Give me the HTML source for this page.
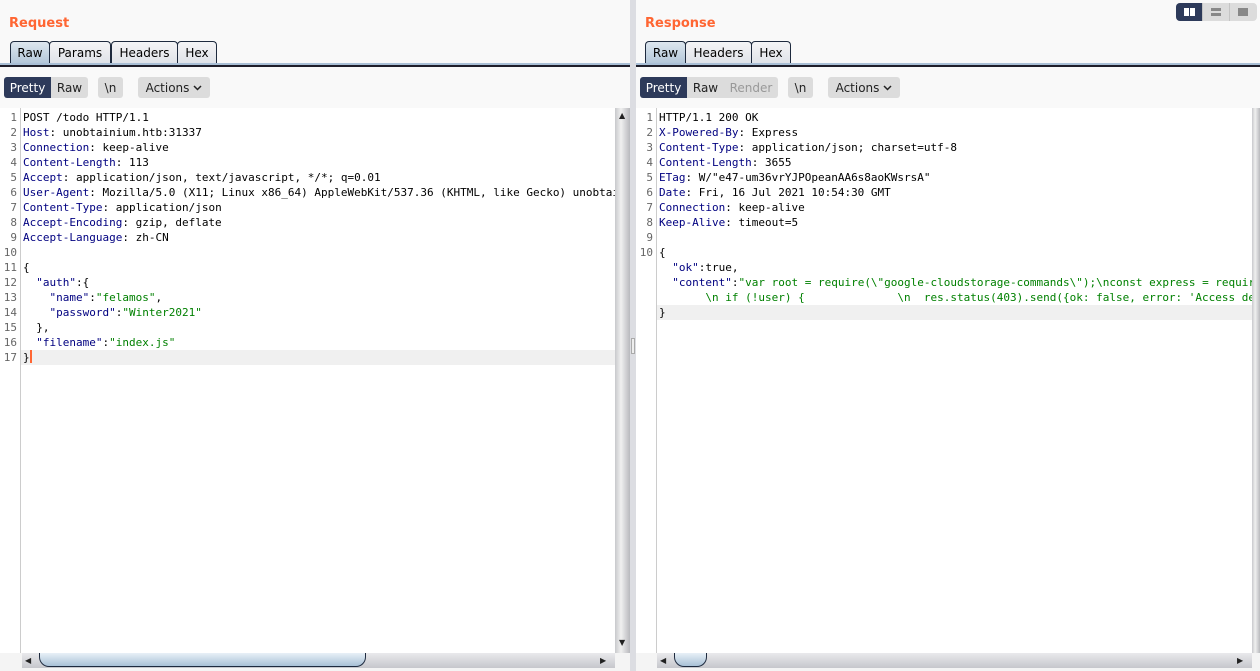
<!DOCTYPE html>
<html><head><meta charset="utf-8"><style>
*{box-sizing:border-box;margin:0;padding:0}
body{width:1260px;height:671px;background:#f9f9f9;position:relative;overflow:hidden;font-family:"DejaVu Sans","Liberation Sans",sans-serif;font-size:12px;color:#000}
.abs{position:absolute}
.title{color:#ff6633;font-weight:bold;font-size:13px;top:16px}
.tab{position:absolute;top:41px;height:23px;border:1px solid #1e2a3e;border-bottom:none;border-radius:4px 4px 0 0;background:linear-gradient(#f4f4f6,#dfe2e8);font-size:12px;line-height:22px;text-align:center}
.tab.sel{background:linear-gradient(#dde6ef,#b2c6d9)}
.tline{position:absolute;top:63px;height:2px;background:#a9bfd6}
.tline2{position:absolute;top:65px;height:2px;background:#1e1e2a}
.btn{position:absolute;top:77px;height:21px;background:#dcdcdc;font-size:12px;line-height:22px;text-align:center;color:#222}
.btn.dark{background:#2d3a5a;color:#fff;border-radius:3px 0 0 3px}
.ed{position:absolute;top:108px;background:#fff;font-family:"DejaVu Sans Mono","Liberation Mono",monospace;font-size:11px;line-height:15px}
.gut{position:absolute;top:0;left:0;bottom:0;border-right:1px solid #ccc;color:#666;text-align:right}
.code{position:absolute;top:2px;white-space:pre}
.k{color:#000080}.g{color:#008000}
.hl{position:absolute;height:15px;background:#f0f0f0}
.vs{position:absolute;top:108px;width:15px;background:linear-gradient(90deg,#c8c9cc,#f0f0f0 40%,#b8b9bd);}
.hs{position:absolute;top:653px;height:15px;background:linear-gradient(#e9e9ec,#c6c7cc)}
.thumb{position:absolute;top:0;height:14px;border:1px solid #1e2a3e;border-top:none;border-radius:0 0 10px 10px;background:linear-gradient(#e8f0f7,#a9c1d6)}
.arr{position:absolute;font-size:8px;color:#222}
.chev{display:inline-block;vertical-align:1px;margin-left:4px}
</style></head><body>
<div class="abs title" style="left:9px">Request</div>
<div class="abs title" style="left:645px">Response</div>

<div class="tab sel" style="left:10px;width:40px">Raw</div>
<div class="tab" style="left:49px;width:62px">Params</div>
<div class="tab" style="left:111px;width:67px">Headers</div>
<div class="tab" style="left:177px;width:40px">Hex</div>
<div class="tline" style="left:0;width:630px"></div><div class="tline2" style="left:0;width:630px"></div>

<div class="tab sel" style="left:645px;width:41px">Raw</div>
<div class="tab" style="left:685px;width:67px">Headers</div>
<div class="tab" style="left:751px;width:40px">Hex</div>
<div class="tline" style="left:636px;width:624px"></div><div class="tline2" style="left:636px;width:624px"></div>

<div class="btn dark" style="left:4px;width:47px">Pretty</div>
<div class="btn" style="left:51px;width:37px;border-radius:0 3px 3px 0">Raw</div>
<div class="btn" style="left:98px;width:25px;border-radius:3px">\n</div>
<div class="btn" style="left:138px;width:72px;border-radius:3px">Actions<svg class="chev" width="9" height="6" viewBox="0 0 9 6"><path d="M1 1L4.5 4.5L8 1" fill="none" stroke="#222" stroke-width="1.5"/></svg></div>

<div class="btn dark" style="left:640px;width:47px">Pretty</div>
<div class="btn" style="left:687px;width:37px">Raw</div>
<div class="btn" style="left:724px;width:54px;color:#999;border-radius:0 3px 3px 0">Render</div>
<div class="btn" style="left:788px;width:25px;border-radius:3px">\n</div>
<div class="btn" style="left:828px;width:72px;border-radius:3px">Actions<svg class="chev" width="9" height="6" viewBox="0 0 9 6"><path d="M1 1L4.5 4.5L8 1" fill="none" stroke="#222" stroke-width="1.5"/></svg></div>

<div class="abs" style="left:1176px;top:3px;width:81px;height:18px;background:#dcdcdc;border-radius:4px;overflow:hidden">
<div class="abs" style="left:0;top:0;width:26px;height:18px;background:#2d3a5a"></div>
<div class="abs" style="left:8px;top:5px;width:5px;height:8px;background:#fff"></div><div class="abs" style="left:14px;top:5px;width:5px;height:8px;background:#fff"></div>
<div class="abs" style="left:26px;top:0;width:1px;height:18px;background:#c4c4c4"></div>
<div class="abs" style="left:35px;top:5px;width:10px;height:3px;background:#888"></div><div class="abs" style="left:35px;top:10px;width:10px;height:3px;background:#888"></div>
<div class="abs" style="left:53px;top:0;width:1px;height:18px;background:#c4c4c4"></div>
<div class="abs" style="left:62px;top:5px;width:10px;height:8px;background:#888"></div>
</div>

<!-- left editor -->
<div class="ed" style="left:0;width:615px;height:545px">
<div class="hl" style="left:21px;top:242px;width:594px"></div>
<div class="gut" style="width:21px;padding-top:2px;padding-right:3px">1<br>2<br>3<br>4<br>5<br>6<br>7<br>8<br>9<br>10<br>11<br>12<br>13<br>14<br>15<br>16<br>17</div>
<div class="code" style="left:23px">POST /todo HTTP/1.1
<span class="k">Host</span>: unobtainium.htb:31337
<span class="k">Connection</span>: keep-alive
<span class="k">Content-Length</span>: 113
<span class="k">Accept</span>: application/json, text/javascript, */*; q=0.01
<span class="k">User-Agent</span>: Mozilla/5.0 (X11; Linux x86_64) AppleWebKit/537.36 (KHTML, like Gecko) unobtainium
<span class="k">Content-Type</span>: application/json
<span class="k">Accept-Encoding</span>: gzip, deflate
<span class="k">Accept-Language</span>: zh-CN

{
  <span class="k">"auth"</span>:{
    <span class="k">"name"</span>:<span class="g">"felamos"</span>,
    <span class="k">"password"</span>:<span class="g">"Winter2021"</span>
  },
  <span class="k">"filename"</span>:<span class="g">"index.js"</span>
}<span style="display:inline-block;width:2px;height:13px;background:#ff6633;vertical-align:-2px"></span></div>
</div>
<div class="vs" style="left:615px;height:545px"><div class="arr" style="left:4px;top:3px">▲</div><div class="arr" style="left:4px;top:530px">▼</div></div>
<div class="abs" style="left:0;top:653px;width:630px;height:18px;background:#f4f4f4"></div>
<div class="hs" style="left:22px;width:593px"><div class="arr" style="left:3px;top:3px">◀</div><div class="thumb" style="left:17px;width:327px"></div><div class="arr" style="left:578px;top:3px">▶</div></div>

<!-- divider -->
<div class="abs" style="left:630px;top:0;width:6px;height:671px;background:#dcdde2"></div>
<div class="abs" style="left:631px;top:338px;width:4px;height:16px;border:1px solid #aaa;background:#eee"></div>

<!-- right editor -->
<div class="ed" style="left:636px;width:616px;height:545px">
<div class="hl" style="left:21px;top:197px;width:595px"></div>
<div class="gut" style="width:21px;padding-top:2px;padding-right:3px">1<br>2<br>3<br>4<br>5<br>6<br>7<br>8<br>9<br>10</div>
<div class="code" style="left:23px;width:593px;overflow:hidden">HTTP/1.1 200 OK
<span class="k">X-Powered-By</span>: Express
<span class="k">Content-Type</span>: application/json; charset=utf-8
<span class="k">Content-Length</span>: 3655
<span class="k">ETag</span>: W/"e47-um36vrYJPOpeanAA6s8aoKWsrsA"
<span class="k">Date</span>: Fri, 16 Jul 2021 10:54:30 GMT
<span class="k">Connection</span>: keep-alive
<span class="k">Keep-Alive</span>: timeout=5

{
  <span class="k">"ok"</span>:true,
  <span class="k">"content"</span>:<span class="g">"var root = require(\"google-cloudstorage-commands\");\nconst express = require</span>
<span class="g">       \n if (!user) {              \n  res.status(403).send({ok: false, error: 'Access denied'</span>
}</div>
</div>
<div class="vs" style="left:1252px;width:8px;height:545px"></div>
<div class="abs" style="left:636px;top:653px;width:624px;height:18px;background:#f4f4f4"></div>
<div class="hs" style="left:657px;width:595px"><div class="arr" style="left:3px;top:3px">◀</div><div class="thumb" style="left:17px;width:33px"></div><div class="arr" style="left:580px;top:3px">▶</div></div>
</body></html>
